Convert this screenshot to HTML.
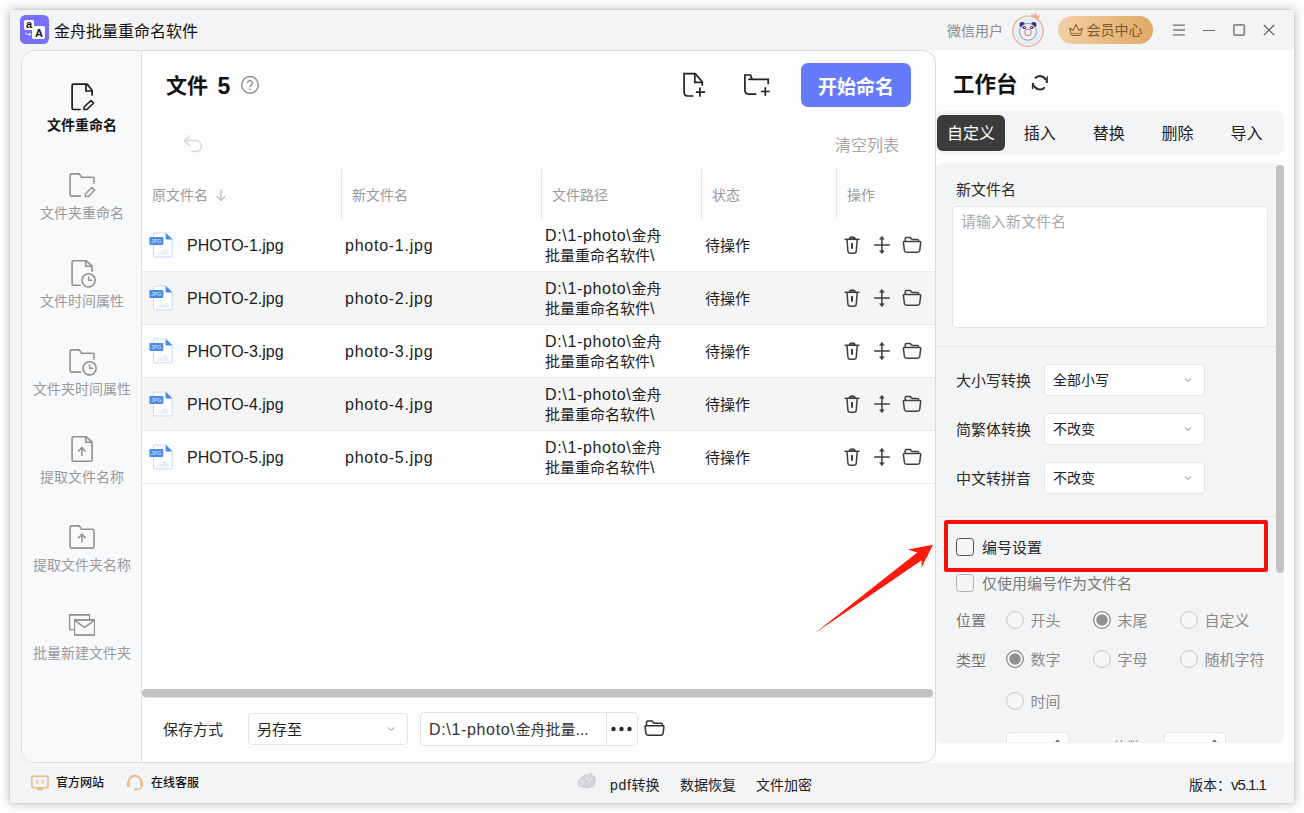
<!DOCTYPE html>
<html lang="zh-CN">
<head>
<meta charset="utf-8">
<title>金舟批量重命名软件</title>
<style>
*{box-sizing:border-box;margin:0;padding:0}
html,body{width:1304px;height:813px;overflow:hidden;background:#fff}
body{font-family:"Liberation Sans","Noto Sans CJK SC",sans-serif;color:#1a1a1a;position:relative}
.abs{position:absolute}
.t{position:absolute;white-space:nowrap;line-height:1}
#win{position:absolute;left:10px;top:10px;width:1284px;height:793px;background:#f3f4f6;box-shadow:0 0 10px rgba(0,0,0,.30),0 0 2px rgba(0,0,0,.10)}
/* everything inside uses page coords via #page */
#page{position:absolute;left:0;top:0;width:1304px;height:813px}
#main{left:21px;top:50px;width:915px;height:713px;background:#fdfdfd;border:1px solid #dadadd;border-radius:14px 13px 13px 14px}
#side{left:22px;top:51px;width:120px;height:711px;background:#f8f9fb;border-right:1px solid #e2e2e5;border-radius:13px 0 0 13px}
#right{left:915px;top:50px;width:379px;height:713px;background:#fdfdfd}
.navl{font-size:14px;color:#9a9a9a;width:120px;left:22px;text-align:center}
.navl.on{color:#141414;font-weight:bold}
.th{font-size:14px;color:#9b9b9b}
.vsep{width:1px;background:#e4e4e6;top:169px;height:50px}
.row{left:142px;width:793px;height:53px;border-bottom:1px solid #e9e9eb}
.row.g{background:#f5f5f6}
.c16{font-size:16px;color:#1c1c1c}
.sel{background:#fff;border:1px solid #e3e4e8;border-radius:4px}
.lab{font-size:15px;color:#2a2a2a}
.rad{width:18px;height:18px;border-radius:50%;border:1px solid #c8c8cb;background:#f6f6f8}
.rad.on{border:1.300px solid #8c8c8e;background:#fbfbfc}
.rad.on::after{content:"";position:absolute;left:2px;top:2px;width:11.400px;height:11.400px;border-radius:50%;background:#909092}
.rl{font-size:15px;color:#8a8a8a}
</style>
</head>
<body>
<div id="win"></div>
<div id="page">
<!--TITLEBAR-->
<div class="abs" style="left:20px;top:15px;width:29px;height:29px;border-radius:5.500px;background:#7870fb"></div>
<div class="abs" style="left:23.800px;top:19.800px;width:10.600px;height:10.200px;border-radius:1.800px;background:#fff"></div>
<div class="abs" style="left:32.300px;top:26.200px;width:12.800px;height:13.100px;border-radius:1.800px;background:#fff"></div>
<div class="t" style="left:26px;top:18.800px;font-size:11px;font-weight:bold;color:#111">a</div>
<div class="t" style="left:35px;top:28.400px;font-size:11px;font-weight:bold;color:#111">A</div>
<svg class="abs" style="left:24px;top:31px" width="9" height="6" viewBox="24 31 9 6"><path d="M25.400 32.600Q26 34.400 28 34.400H30.400" fill="none" stroke="#fff" stroke-width="0.900"/><path d="M29.400 32.800L31.200 34.400L29.400 36z" fill="#fff"/></svg>
<div class="t" style="left:54px;top:23.800px;font-size:16px;color:#111">金舟批量重命名软件</div>
<div class="t" style="left:947px;top:24px;font-size:14px;color:#8a8a8a">微信用户</div>
<!-- avatar -->
<svg class="abs" style="left:1010px;top:11px" width="38" height="38" viewBox="0 0 38 38">
<circle cx="18" cy="20.200" r="15.200" fill="#fdf3ea" stroke="#eaa988" stroke-width="1.2"/>
<circle cx="18" cy="20.200" r="13.600" fill="#dff0fc"/>
<circle cx="12.200" cy="13.600" r="2.700" fill="#3d2c6e"/><circle cx="23.800" cy="13.600" r="2.700" fill="#3d2c6e"/>
<circle cx="18" cy="20.800" r="8.400" fill="#fbefe2" stroke="#7566a6" stroke-width="0.700"/>
<ellipse cx="14.300" cy="16.600" rx="1.900" ry="1.500" fill="#4b3a80"/><ellipse cx="21.700" cy="16.600" rx="1.900" ry="1.500" fill="#4b3a80"/>
<circle cx="14.600" cy="16.500" r="0.600" fill="#fff"/><circle cx="21.400" cy="16.500" r="0.600" fill="#fff"/>
<rect x="15" y="18.200" width="6" height="6.200" rx="2" fill="#fdf6ee" stroke="#7566a6" stroke-width="0.800"/>
<path d="M20.700 5.800l0.900-3.400 2.300 2.400 1.700-3 1.500 3.300 3-1-1.600 4.200z" fill="#f0ae92"/>
</svg>
<!-- vip -->
<div class="abs" style="left:1058px;top:16px;width:95px;height:28px;border-radius:14px;background:linear-gradient(90deg,#f1d0a6,#e0a964)"></div>
<svg class="abs" style="left:1068px;top:23px" width="16" height="14" viewBox="0 0 16 14"><path d="M1.700 5.200l3.300 2.200L8 1.400l3 6 3.300-2.200-1.300 5.800c-0.200 0.900-0.800 1.400-1.700 1.400H4.700c-0.900 0-1.500-0.500-1.700-1.400z" fill="none" stroke="#8a6633" stroke-width="1.100" stroke-linejoin="round"/><path d="M3.600 10.300H12.400" stroke="#8a6633" stroke-width="0.800"/></svg>
<div class="t" style="left:1086.5px;top:22.5px;font-size:14px;color:#7a5829">会员中心</div>
<!-- window controls -->
<svg class="abs" style="left:1172px;top:23px" width="14" height="14" viewBox="0 0 14 14"><path d="M1 2.100h12M1 7h12M1 11.900h12" stroke="#969696" stroke-width="1.800"/></svg>
<div class="abs" style="left:1203px;top:30px;width:12px;height:1.3px;background:#6a6a6a"></div>
<svg class="abs" style="left:1232px;top:23px" width="14" height="14" viewBox="0 0 14 14"><rect x="1.900" y="1.900" width="10.400" height="10.200" rx="1" fill="none" stroke="#878787" stroke-width="1.700"/></svg>
<svg class="abs" style="left:1262px;top:24px" width="14" height="14" viewBox="0 0 14 14"><path d="M1.800 1l10.400 10.200M12.200 1L1.800 11.200" stroke="#555" stroke-width="1.100"/></svg>

<!--MAIN-->
<div class="abs" id="right"></div>
<div class="abs" id="main"></div>
<div class="abs" id="side"></div>
<svg class="abs" style="left:62px;top:76px" width="40" height="40" viewBox="62 76 40 40"><g fill="none" stroke="#1c1c1c" stroke-width="1.700" stroke-linejoin="round"><path d="M80.700 109.500H73.600Q72.100 109.500 72.100 108V85.600Q72.100 84.100 73.600 84.100H87.100L92.100 90.300V95.700"/><path d="M86 84.100V91H92.100" stroke-linejoin="miter"/><path d="M83.900 109.600L84.200 106.700L91 100.600L93.500 102.900L87 109.600z" stroke-width="1.500"/></g></svg>
<svg class="abs" style="left:62px;top:165px" width="40" height="480" viewBox="62 165 40 480"><g fill="none" stroke="#919191" stroke-width="1.600" stroke-linejoin="round"><path d="M80.900 196.1H71.600Q70.100 196.1 70.100 194.6V175.4Q70.100 173.9 71.600 173.9H79.200L81.700 177.3H92.800Q94 177.3 94 178.5V183.7"/><path d="M85.400 196.500V193.800L91.800 187.600L94.700 190.100L88.500 196.500z" stroke-width="1.400"/><path d="M80.700 285.2H73.400Q72.100 285.2 72.100 283.9V262.1Q72.100 260.8 73.400 260.8H86.400L92.100 266.2V271.7"/><path d="M85.800 260.8V266.3H92.100"/><circle cx="88.6" cy="280.3" r="6.600"/><path d="M88.6 276.6V280.3H92.3" stroke-width="1.400"/><path d="M80.900 372.1H71.600Q70.100 372.1 70.100 370.6V351.4Q70.100 349.9 71.600 349.9H79.200L81.700 353.3H92.800Q94 353.3 94 354.5V359.7"/><circle cx="89.6" cy="368.3" r="6.600"/><path d="M89.6 364.6V368.3H93.3" stroke-width="1.400"/><path d="M73.400 436.8H86.400L92.100 442.2V459.9Q92.100 461.2 90.800 461.2H73.400Q72.100 461.2 72.100 459.9V438.1Q72.100 436.8 73.400 436.8z"/><path d="M85.800 436.8V442.3H92.100"/><path d="M81.9 447.90000000000003V456.1M78.2 451.6L81.9 447.6L85.60000000000001 451.6" stroke-width="1.500" stroke-linejoin="miter"/><path d="M71.600 525.9H79.200L81.700 529.3H92.500Q94 529.3 94 530.8V546.6Q94 548.1 92.500 548.1H71.600Q70.100 548.1 70.100 546.6V527.4Q70.100 525.9 71.600 525.9z"/><path d="M81.9 534.5V542.6M78.2 538.2L81.9 534.2L85.60000000000001 538.2" stroke-width="1.500" stroke-linejoin="miter"/><path d="M74.300 629.800H69.600V614.800H89.500V619.300" stroke-width="1.300" stroke-linejoin="miter"/><path d="M69.100 614.800H89.900" stroke-width="1.700"/><rect x="74.600" y="619.900" width="19.800" height="15.100" stroke-width="1.100"/><path d="M74.100 619.900H94.900M74.100 635H94.900" stroke-width="1.700"/><path d="M75 620.700L84.500 627.400L94 620.700" stroke-width="1.500" stroke-linejoin="miter"/></g></svg>
<div class="t navl on" style="top:118px">文件重命名</div>
<div class="t navl" style="top:206px">文件夹重命名</div>
<div class="t navl" style="top:294px">文件时间属性</div>
<div class="t navl" style="top:382px">文件夹时间属性</div>
<div class="t navl" style="top:470px">提取文件名称</div>
<div class="t navl" style="top:558px">提取文件夹名称</div>
<div class="t navl" style="top:646px">批量新建文件夹</div>
<div class="t" style="left:166px;top:69px;font-size:21px;font-weight:bold;color:#111;line-height:32px;height:32px">文件<span style="font-size:23px;margin-left:9.500px;position:relative;top:0.500px">5</span></div>
<svg class="abs" style="left:240px;top:75px" width="20" height="20" viewBox="0 0 20 20"><circle cx="10" cy="9.900" r="8.300" fill="none" stroke="#8f8f8f" stroke-width="1.500"/><path d="M7.500 8.100a2.500 2.500 0 1 1 3.800 2.100c-0.900 0.600-1.300 1-1.300 2" fill="none" stroke="#8f8f8f" stroke-width="1.400"/><circle cx="10" cy="14.300" r="0.900" fill="#8f8f8f"/></svg>
<svg class="abs" style="left:675px;top:65px" width="100" height="40" viewBox="675 65 100 40"><g fill="none" stroke="#222" stroke-width="1.700"><path d="M693.400 96H688.200Q684.100 96 684.100 91.900V73.700H695.200L702.300 81.800V85.800"/><path d="M694.800 73.700V82.300H702.300"/><path d="M695.900 92.200H705.100M699.900 87.600V96.800"/><path d="M756.300 94.100H749Q744.900 94.100 744.900 90V75H750.500L752.100 79.300H768.200V84.300"/><path d="M748.200 79.300H752.100"/><path d="M760.900 91.500H769.700M765.300 87.200V95.800"/></g></svg>
<div class="abs" style="left:801px;top:63px;width:110px;height:44px;border-radius:7px;background:#657bfb"></div>
<div class="t" style="left:801px;top:77.500px;width:110px;text-align:center;font-size:19px;font-weight:bold;color:#fff">开始命名</div>
<svg class="abs" style="left:182px;top:133px" width="22" height="22" viewBox="0 0 22 22"><path d="M7.500 2.800L2.500 7.600l5 4.800" fill="none" stroke="#d9d9dc" stroke-width="1.500" stroke-linejoin="round" stroke-linecap="round"/><path d="M3 7.600H14a5.500 5.500 0 0 1 0 11H10" fill="none" stroke="#d9d9dc" stroke-width="1.500" stroke-linecap="round"/></svg>
<div class="t" style="left:835px;top:137.500px;font-size:16px;color:#a8a8a8">清空列表</div>
<div class="t th" style="left:152px;top:188px">原文件名</div>
<div class="t th" style="left:352px;top:188px">新文件名</div>
<div class="t th" style="left:552px;top:188px">文件路径</div>
<div class="t th" style="left:712px;top:188px">状态</div>
<div class="t th" style="left:847px;top:188px">操作</div>
<svg class="abs" style="left:215px;top:188px" width="12" height="14" viewBox="0 0 12 14"><path d="M6 1.200V12.500M1.800 8.300L6 12.500l4.200-4.200" fill="none" stroke="#bcbcbc" stroke-width="1.300"/></svg>
<div class="abs vsep" style="left:341px"></div>
<div class="abs vsep" style="left:541px"></div>
<div class="abs vsep" style="left:701px"></div>
<div class="abs vsep" style="left:836px"></div>
<div class="abs row" style="top:219px"></div>
<svg class="abs" style="left:146px;top:228px" width="32" height="34" viewBox="146 228 32 34"><path d="M154.600 233H165.800L172.200 239.300V255.800Q172.200 256.900 171.100 256.900H154.600Q153.500 256.900 153.500 255.800V234.100Q153.500 233 154.600 233z" fill="#fefeff" stroke="#c6d9f6" stroke-width="1"/><path d="M165.600 232.700L172.500 239.500H166.600Q165.600 239.500 165.600 238.500z" fill="#4a87e6"/><path d="M156.900 254.700L160 250.600 161.800 252.400C163 249 166 247.200 168 251.500L169 254.700z" fill="#e6f0fd"/><circle cx="160.400" cy="247.200" r="0.900" fill="#e6f0fd"/><rect x="149.400" y="237" width="13.900" height="7.900" rx="0.800" fill="#4e89e6"/><text x="156.300" y="242.900" font-size="5.400" font-family="Liberation Sans, sans-serif" fill="#dfeafc" text-anchor="middle">JPG</text></svg>
<div class="t c16" style="left:187px;top:238px">PHOTO-1.jpg</div>
<div class="t c16" style="left:345px;top:238px;letter-spacing:0.750px">photo-1.jpg</div>
<div class="t c16" style="left:545px;top:226px;line-height:20px;font-size:15px"><span style="font-size:16px;letter-spacing:0.660px">D:\1-photo\</span>金舟<br>批量重命名软件<span style="font-size:16px">\</span></div>
<div class="t" style="left:705px;top:238px;font-size:15px;color:#1c1c1c">待操作</div>
<svg class="abs" style="left:840px;top:228px" width="90" height="34" viewBox="840 228 90 34"><g fill="none" stroke="#404040" stroke-width="1.500"><path d="M844.500 239.300H859.600"/><path d="M849.400 239.300C849.600 236.300 855 236.300 855.200 239.300z" fill="#404040" fill-opacity="0.350"/><path d="M847 239.600L847.900 251Q848.100 253.300 850.400 253.300H853.800Q856.100 253.300 856.300 251L857.200 239.600"/><path d="M852 243.100V248.700" stroke-width="2"/><path d="M881.900 237.500V252.500M874.100 244.900H889.800"/><path d="M881.900 236.300L884.200 239.300H879.600zM881.900 253.700L884.200 250.700H879.600z" fill="#404040" stroke-width="0.600"/><path d="M905.200 241.600V238.700Q905.200 237.600 906.300 237.600H910.300L912.200 239.500H917.400Q918.500 239.500 918.500 240.600V241.600"/><path d="M904.300 241.600H919.800Q920.800 241.600 920.700 242.600L919.700 250.400Q919.400 252.200 917.600 252.200H906.500Q904.700 252.200 904.400 250.400L903.400 242.600Q903.300 241.600 904.300 241.600z"/></g></svg>
<div class="abs row g" style="top:272px"></div>
<svg class="abs" style="left:146px;top:281px" width="32" height="34" viewBox="146 228 32 34"><path d="M154.600 233H165.800L172.200 239.300V255.800Q172.200 256.900 171.100 256.900H154.600Q153.500 256.900 153.500 255.800V234.100Q153.500 233 154.600 233z" fill="#fefeff" stroke="#c6d9f6" stroke-width="1"/><path d="M165.600 232.700L172.500 239.500H166.600Q165.600 239.500 165.600 238.500z" fill="#4a87e6"/><path d="M156.900 254.700L160 250.600 161.800 252.400C163 249 166 247.200 168 251.500L169 254.700z" fill="#e6f0fd"/><circle cx="160.400" cy="247.200" r="0.900" fill="#e6f0fd"/><rect x="149.400" y="237" width="13.900" height="7.900" rx="0.800" fill="#4e89e6"/><text x="156.300" y="242.900" font-size="5.400" font-family="Liberation Sans, sans-serif" fill="#dfeafc" text-anchor="middle">JPG</text></svg>
<div class="t c16" style="left:187px;top:291px">PHOTO-2.jpg</div>
<div class="t c16" style="left:345px;top:291px;letter-spacing:0.750px">photo-2.jpg</div>
<div class="t c16" style="left:545px;top:279px;line-height:20px;font-size:15px"><span style="font-size:16px;letter-spacing:0.660px">D:\1-photo\</span>金舟<br>批量重命名软件<span style="font-size:16px">\</span></div>
<div class="t" style="left:705px;top:291px;font-size:15px;color:#1c1c1c">待操作</div>
<svg class="abs" style="left:840px;top:281px" width="90" height="34" viewBox="840 228 90 34"><g fill="none" stroke="#404040" stroke-width="1.500"><path d="M844.500 239.300H859.600"/><path d="M849.400 239.300C849.600 236.300 855 236.300 855.200 239.300z" fill="#404040" fill-opacity="0.350"/><path d="M847 239.600L847.900 251Q848.100 253.300 850.400 253.300H853.800Q856.100 253.300 856.300 251L857.200 239.600"/><path d="M852 243.100V248.700" stroke-width="2"/><path d="M881.900 237.500V252.500M874.100 244.900H889.800"/><path d="M881.900 236.300L884.200 239.300H879.600zM881.900 253.700L884.200 250.700H879.600z" fill="#404040" stroke-width="0.600"/><path d="M905.200 241.600V238.700Q905.200 237.600 906.300 237.600H910.300L912.200 239.500H917.400Q918.500 239.500 918.500 240.600V241.600"/><path d="M904.300 241.600H919.800Q920.800 241.600 920.700 242.600L919.700 250.400Q919.400 252.200 917.600 252.200H906.500Q904.700 252.200 904.400 250.400L903.400 242.600Q903.300 241.600 904.300 241.600z"/></g></svg>
<div class="abs row" style="top:325px"></div>
<svg class="abs" style="left:146px;top:334px" width="32" height="34" viewBox="146 228 32 34"><path d="M154.600 233H165.800L172.200 239.300V255.800Q172.200 256.900 171.100 256.900H154.600Q153.500 256.900 153.500 255.800V234.100Q153.500 233 154.600 233z" fill="#fefeff" stroke="#c6d9f6" stroke-width="1"/><path d="M165.600 232.700L172.500 239.500H166.600Q165.600 239.500 165.600 238.500z" fill="#4a87e6"/><path d="M156.900 254.700L160 250.600 161.800 252.400C163 249 166 247.200 168 251.500L169 254.700z" fill="#e6f0fd"/><circle cx="160.400" cy="247.200" r="0.900" fill="#e6f0fd"/><rect x="149.400" y="237" width="13.900" height="7.900" rx="0.800" fill="#4e89e6"/><text x="156.300" y="242.900" font-size="5.400" font-family="Liberation Sans, sans-serif" fill="#dfeafc" text-anchor="middle">JPG</text></svg>
<div class="t c16" style="left:187px;top:344px">PHOTO-3.jpg</div>
<div class="t c16" style="left:345px;top:344px;letter-spacing:0.750px">photo-3.jpg</div>
<div class="t c16" style="left:545px;top:332px;line-height:20px;font-size:15px"><span style="font-size:16px;letter-spacing:0.660px">D:\1-photo\</span>金舟<br>批量重命名软件<span style="font-size:16px">\</span></div>
<div class="t" style="left:705px;top:344px;font-size:15px;color:#1c1c1c">待操作</div>
<svg class="abs" style="left:840px;top:334px" width="90" height="34" viewBox="840 228 90 34"><g fill="none" stroke="#404040" stroke-width="1.500"><path d="M844.500 239.300H859.600"/><path d="M849.400 239.300C849.600 236.300 855 236.300 855.200 239.300z" fill="#404040" fill-opacity="0.350"/><path d="M847 239.600L847.900 251Q848.100 253.300 850.400 253.300H853.800Q856.100 253.300 856.300 251L857.200 239.600"/><path d="M852 243.100V248.700" stroke-width="2"/><path d="M881.900 237.500V252.500M874.100 244.900H889.800"/><path d="M881.900 236.300L884.200 239.300H879.600zM881.900 253.700L884.200 250.700H879.600z" fill="#404040" stroke-width="0.600"/><path d="M905.200 241.600V238.700Q905.200 237.600 906.300 237.600H910.300L912.200 239.500H917.400Q918.500 239.500 918.500 240.600V241.600"/><path d="M904.300 241.600H919.800Q920.800 241.600 920.700 242.600L919.700 250.400Q919.400 252.200 917.600 252.200H906.500Q904.700 252.200 904.400 250.400L903.400 242.600Q903.300 241.600 904.300 241.600z"/></g></svg>
<div class="abs row g" style="top:378px"></div>
<svg class="abs" style="left:146px;top:387px" width="32" height="34" viewBox="146 228 32 34"><path d="M154.600 233H165.800L172.200 239.300V255.800Q172.200 256.900 171.100 256.900H154.600Q153.500 256.900 153.500 255.800V234.100Q153.500 233 154.600 233z" fill="#fefeff" stroke="#c6d9f6" stroke-width="1"/><path d="M165.600 232.700L172.500 239.500H166.600Q165.600 239.500 165.600 238.500z" fill="#4a87e6"/><path d="M156.900 254.700L160 250.600 161.800 252.400C163 249 166 247.200 168 251.500L169 254.700z" fill="#e6f0fd"/><circle cx="160.400" cy="247.200" r="0.900" fill="#e6f0fd"/><rect x="149.400" y="237" width="13.900" height="7.900" rx="0.800" fill="#4e89e6"/><text x="156.300" y="242.900" font-size="5.400" font-family="Liberation Sans, sans-serif" fill="#dfeafc" text-anchor="middle">JPG</text></svg>
<div class="t c16" style="left:187px;top:397px">PHOTO-4.jpg</div>
<div class="t c16" style="left:345px;top:397px;letter-spacing:0.750px">photo-4.jpg</div>
<div class="t c16" style="left:545px;top:385px;line-height:20px;font-size:15px"><span style="font-size:16px;letter-spacing:0.660px">D:\1-photo\</span>金舟<br>批量重命名软件<span style="font-size:16px">\</span></div>
<div class="t" style="left:705px;top:397px;font-size:15px;color:#1c1c1c">待操作</div>
<svg class="abs" style="left:840px;top:387px" width="90" height="34" viewBox="840 228 90 34"><g fill="none" stroke="#404040" stroke-width="1.500"><path d="M844.500 239.300H859.600"/><path d="M849.400 239.300C849.600 236.300 855 236.300 855.200 239.300z" fill="#404040" fill-opacity="0.350"/><path d="M847 239.600L847.900 251Q848.100 253.300 850.400 253.300H853.800Q856.100 253.300 856.300 251L857.200 239.600"/><path d="M852 243.100V248.700" stroke-width="2"/><path d="M881.900 237.500V252.500M874.100 244.900H889.800"/><path d="M881.900 236.300L884.200 239.300H879.600zM881.900 253.700L884.200 250.700H879.600z" fill="#404040" stroke-width="0.600"/><path d="M905.200 241.600V238.700Q905.200 237.600 906.300 237.600H910.300L912.200 239.500H917.400Q918.500 239.500 918.500 240.600V241.600"/><path d="M904.300 241.600H919.800Q920.800 241.600 920.700 242.600L919.700 250.400Q919.400 252.200 917.600 252.200H906.500Q904.700 252.200 904.400 250.400L903.400 242.600Q903.300 241.600 904.300 241.600z"/></g></svg>
<div class="abs row" style="top:431px"></div>
<svg class="abs" style="left:146px;top:440px" width="32" height="34" viewBox="146 228 32 34"><path d="M154.600 233H165.800L172.200 239.300V255.800Q172.200 256.900 171.100 256.900H154.600Q153.500 256.900 153.500 255.800V234.100Q153.500 233 154.600 233z" fill="#fefeff" stroke="#c6d9f6" stroke-width="1"/><path d="M165.600 232.700L172.500 239.500H166.600Q165.600 239.500 165.600 238.500z" fill="#4a87e6"/><path d="M156.900 254.700L160 250.600 161.800 252.400C163 249 166 247.200 168 251.500L169 254.700z" fill="#e6f0fd"/><circle cx="160.400" cy="247.200" r="0.900" fill="#e6f0fd"/><rect x="149.400" y="237" width="13.900" height="7.900" rx="0.800" fill="#4e89e6"/><text x="156.300" y="242.900" font-size="5.400" font-family="Liberation Sans, sans-serif" fill="#dfeafc" text-anchor="middle">JPG</text></svg>
<div class="t c16" style="left:187px;top:450px">PHOTO-5.jpg</div>
<div class="t c16" style="left:345px;top:450px;letter-spacing:0.750px">photo-5.jpg</div>
<div class="t c16" style="left:545px;top:438px;line-height:20px;font-size:15px"><span style="font-size:16px;letter-spacing:0.660px">D:\1-photo\</span>金舟<br>批量重命名软件<span style="font-size:16px">\</span></div>
<div class="t" style="left:705px;top:450px;font-size:15px;color:#1c1c1c">待操作</div>
<svg class="abs" style="left:840px;top:440px" width="90" height="34" viewBox="840 228 90 34"><g fill="none" stroke="#404040" stroke-width="1.500"><path d="M844.500 239.300H859.600"/><path d="M849.400 239.300C849.600 236.300 855 236.300 855.200 239.300z" fill="#404040" fill-opacity="0.350"/><path d="M847 239.600L847.900 251Q848.100 253.300 850.400 253.300H853.800Q856.100 253.300 856.300 251L857.200 239.600"/><path d="M852 243.100V248.700" stroke-width="2"/><path d="M881.900 237.500V252.500M874.100 244.900H889.800"/><path d="M881.900 236.300L884.200 239.300H879.600zM881.900 253.700L884.200 250.700H879.600z" fill="#404040" stroke-width="0.600"/><path d="M905.200 241.600V238.700Q905.200 237.600 906.300 237.600H910.300L912.200 239.500H917.400Q918.500 239.500 918.500 240.600V241.600"/><path d="M904.300 241.600H919.800Q920.800 241.600 920.700 242.600L919.700 250.400Q919.400 252.200 917.600 252.200H906.500Q904.700 252.200 904.400 250.400L903.400 242.600Q903.300 241.600 904.300 241.600z"/></g></svg>
<div class="abs" style="left:142px;top:697px;width:793px;height:1px;background:#e4e4e7"></div>
<div class="abs" style="left:142px;top:689px;width:791px;height:8px;border-radius:4px;background:#c2c2c2"></div>
<div class="t" style="left:163px;top:722px;font-size:15px;color:#2a2a2a">保存方式</div>
<div class="abs sel" style="left:248px;top:713px;width:160px;height:32px"></div>
<div class="t" style="left:257px;top:722px;font-size:15px;color:#222">另存至</div>
<svg class="abs" style="left:386px;top:725px" width="10" height="8" viewBox="0 0 10 8"><path d="M2 2.500l3 3 3-3" fill="none" stroke="#b5b5b5" stroke-width="1.100"/></svg>
<div class="abs sel" style="left:420px;top:712px;width:218px;height:34px"></div>
<div class="abs" style="left:606px;top:713px;width:1px;height:32px;background:#e3e4e8"></div>
<div class="t" style="left:429px;top:722px;font-size:15px;color:#333"><span style="font-size:16px;letter-spacing:0.660px">D:\1-photo\</span>金舟批量<span style="font-size:16px">...</span></div>
<svg class="abs" style="left:609.0px;top:725px" width="8" height="8" viewBox="0 0 8 8"><circle cx="4.500" cy="4" r="2.200" fill="#262626"/></svg>
<svg class="abs" style="left:616.8px;top:725px" width="8" height="8" viewBox="0 0 8 8"><circle cx="4.500" cy="4" r="2.200" fill="#262626"/></svg>
<svg class="abs" style="left:624.6px;top:725px" width="8" height="8" viewBox="0 0 8 8"><circle cx="4.500" cy="4" r="2.200" fill="#262626"/></svg>
<svg class="abs" style="left:643.5px;top:719px" width="22" height="19" viewBox="0 0 22 19"><path d="M2.500 7V3.500a1.500 1.500 0 0 1 1.500-1.500h4l2 2.300H17a1.500 1.500 0 0 1 1.500 1.500V7" fill="none" stroke="#2e2e2e" stroke-width="1.500" stroke-linejoin="round"/><path d="M2 6.800H19a0.900 0.900 0 0 1 0.900 1l-0.800 6.700a2 2 0 0 1-2 1.800H4a2 2 0 0 1-2-1.800L1.100 7.800a0.900 0.900 0 0 1 0.900-1z" fill="none" stroke="#2e2e2e" stroke-width="1.500" stroke-linejoin="round"/></svg>
<svg class="abs" style="left:800px;top:530px" width="150" height="115" viewBox="800 530 150 115"><path d="M814.400 633.500L917.300 552.600L907.900 549.600L933 544.800L921.500 567.600L921.700 560.300Z" fill="#fb1a0d"/></svg>

<!--RIGHT-->
<div class="t" style="left:953px;top:75px;font-size:21.500px;font-weight:bold;color:#111">工作台</div>
<svg class="abs" style="left:1028px;top:71px" width="24" height="24" viewBox="-12 -12 24 24"><g transform="translate(-0.100,-0.200)" fill="none" stroke="#262626" stroke-width="2"><path d="M-4.900 -4.500A6.600 6.600 0 0 1 6.100 -2.600"/><path d="M8 -6.600V0.200H5.800L6.900 -6.600z" fill="#262626" stroke="none"/><path d="M4.900 4.500A6.600 6.600 0 0 1 -6.100 2.600"/><path d="M-8 6.400V0.200H-5.800L-6.900 6.400z" fill="#262626" stroke="none"/></g></svg>
<div class="abs" style="left:936px;top:111px;width:348px;height:43.500px;border-radius:8px;background:#f3f4f6"></div>
<div class="abs" style="left:937px;top:115px;width:68px;height:35.500px;border-radius:6px;background:#3b3b3b"></div>
<div class="t" style="left:931.0px;top:126px;width:80px;text-align:center;font-size:16px;color:#fff">自定义</div>
<div class="t" style="left:999.8px;top:126px;width:80px;text-align:center;font-size:16px;color:#1c1c1c">插入</div>
<div class="t" style="left:1068.7px;top:126px;width:80px;text-align:center;font-size:16px;color:#1c1c1c">替换</div>
<div class="t" style="left:1137.5px;top:126px;width:80px;text-align:center;font-size:16px;color:#1c1c1c">删除</div>
<div class="t" style="left:1206.4px;top:126px;width:80px;text-align:center;font-size:16px;color:#1c1c1c">导入</div>
<div class="abs" style="left:936px;top:163px;width:348px;height:579.600px;border-radius:8px 8px 7px 7px;background:#f3f4f6"></div>
<div class="abs" style="left:1276px;top:165px;width:7.500px;height:408px;border-radius:4px;background:#c2c2c2"></div>
<div class="t lab" style="left:956px;top:182px">新文件名</div>
<div class="abs sel" style="left:952px;top:206px;width:315.500px;height:121.500px"></div>
<div class="t" style="left:961px;top:214px;font-size:15px;color:#a9a9a9">请输入新文件名</div>
<div class="abs" style="left:936px;top:346px;width:340px;height:1px;background:#e4e5e8"></div>
<div class="t lab" style="left:956px;top:372.5px">大小写转换</div>
<div class="abs sel" style="left:1044px;top:364px;width:160.500px;height:31.500px"></div>
<div class="t" style="left:1053px;top:373px;font-size:14px;color:#222">全部小写</div>
<svg class="abs" style="left:1183px;top:376px" width="10" height="8" viewBox="0 0 10 8"><path d="M2 2.500l3 3 3-3" fill="none" stroke="#b5b5b5" stroke-width="1.100"/></svg>
<div class="t lab" style="left:956px;top:421.5px">简繁体转换</div>
<div class="abs sel" style="left:1044px;top:413px;width:160.500px;height:31.500px"></div>
<div class="t" style="left:1053px;top:422px;font-size:14px;color:#222">不改变</div>
<svg class="abs" style="left:1183px;top:425px" width="10" height="8" viewBox="0 0 10 8"><path d="M2 2.500l3 3 3-3" fill="none" stroke="#b5b5b5" stroke-width="1.100"/></svg>
<div class="t lab" style="left:956px;top:470.5px">中文转拼音</div>
<div class="abs sel" style="left:1044px;top:462px;width:160.500px;height:31.500px"></div>
<div class="t" style="left:1053px;top:471px;font-size:14px;color:#222">不改变</div>
<svg class="abs" style="left:1183px;top:474px" width="10" height="8" viewBox="0 0 10 8"><path d="M2 2.500l3 3 3-3" fill="none" stroke="#b5b5b5" stroke-width="1.100"/></svg>
<div class="abs" style="left:936px;top:516px;width:340px;height:1px;background:#e4e5e8"></div>
<div class="abs" style="left:944px;top:519.500px;width:324px;height:52px;border:4px solid #fb0f0a;border-radius:2.500px"></div>
<div class="abs" style="left:956px;top:538px;width:18px;height:17.500px;border:1.300px solid #505050;border-radius:3.500px;background:#f5f5f7"></div>
<div class="t" style="left:982px;top:540px;font-size:15px;color:#2a2a2a">编号设置</div>
<div class="abs" style="left:956px;top:574px;width:18px;height:18px;border:1.200px solid #b0b0b2;border-radius:3.500px;background:#f5f5f7"></div>
<div class="t" style="left:982px;top:576px;font-size:15px;color:#7a7a7a">仅使用编号作为文件名</div>
<div class="t" style="left:956px;top:613px;font-size:15px;color:#747474">位置</div>
<svg class="abs" style="left:1005px;top:610px" width="20" height="20" viewBox="0 0 20 20"><circle cx="10" cy="10" r="8.400" fill="#f7f7f9" stroke="#c6c6c9" stroke-width="1"/></svg>
<div class="t rl" style="left:1030.5px;top:613.0px">开头</div>
<svg class="abs" style="left:1092px;top:610px" width="20" height="20" viewBox="0 0 20 20"><circle cx="10" cy="10" r="8.300" fill="#fbfbfc" stroke="#8c8c8e" stroke-width="1.300"/><circle cx="10" cy="10" r="5.800" fill="#919193"/></svg>
<div class="t rl" style="left:1117.5px;top:613.0px">末尾</div>
<svg class="abs" style="left:1179px;top:610px" width="20" height="20" viewBox="0 0 20 20"><circle cx="10" cy="10" r="8.400" fill="#f7f7f9" stroke="#c6c6c9" stroke-width="1"/></svg>
<div class="t rl" style="left:1204.5px;top:613.0px">自定义</div>
<div class="t" style="left:956px;top:653px;font-size:15px;color:#747474">类型</div>
<svg class="abs" style="left:1005px;top:649px" width="20" height="20" viewBox="0 0 20 20"><circle cx="10" cy="10" r="8.300" fill="#fbfbfc" stroke="#8c8c8e" stroke-width="1.300"/><circle cx="10" cy="10" r="5.800" fill="#919193"/></svg>
<div class="t rl" style="left:1030.5px;top:652.0px">数字</div>
<svg class="abs" style="left:1092px;top:649px" width="20" height="20" viewBox="0 0 20 20"><circle cx="10" cy="10" r="8.400" fill="#f7f7f9" stroke="#c6c6c9" stroke-width="1"/></svg>
<div class="t rl" style="left:1117.5px;top:652.0px">字母</div>
<svg class="abs" style="left:1179px;top:649px" width="20" height="20" viewBox="0 0 20 20"><circle cx="10" cy="10" r="8.400" fill="#f7f7f9" stroke="#c6c6c9" stroke-width="1"/></svg>
<div class="t rl" style="left:1204.5px;top:652.0px">随机字符</div>
<svg class="abs" style="left:1005px;top:691px" width="20" height="20" viewBox="0 0 20 20"><circle cx="10" cy="10" r="8.400" fill="#f7f7f9" stroke="#c6c6c9" stroke-width="1"/></svg>
<div class="t rl" style="left:1030.5px;top:693.5px">时间</div>
<div class="abs" style="left:936px;top:725px;width:348px;height:17px;overflow:hidden;border-radius:0 0 7px 7px"><div class="abs sel" style="left:70px;top:6.500px;width:62.500px;height:30px;border-radius:5px"></div><div class="abs sel" style="left:227.500px;top:6.500px;width:62px;height:30px;border-radius:5px"></div><div class="t" style="left:176px;top:14.500px;font-size:15px;color:#888">位数</div><div class="abs" style="left:119.800px;top:14.600px;width:3px;height:3px;background:#666;transform:rotate(45deg)"></div><div class="abs" style="left:276.800px;top:14.600px;width:3px;height:3px;background:#666;transform:rotate(45deg)"></div></div>

<!--FOOTER-->
<svg class="abs" style="left:24px;top:766px" width="130" height="34" viewBox="24 766 130 34"><g fill="none" stroke="#ecbc8a"><rect x="31.900" y="776.200" width="16.100" height="11.600" rx="1.600" stroke-width="1.600"/><path d="M36.800 789.700H43.200" stroke-width="1.500"/><path d="M40 788V789.500" stroke-width="3.500"/><path d="M38.300 780.200L36.400 782L38.300 783.800M41.700 780.200L43.600 782L41.700 783.800" stroke-width="1.200"/><path d="M128.600 784V782.200A6.400 6.400 0 0 1 141.400 782.200V784" stroke-width="2"/><rect x="126.800" y="781.300" width="3" height="5.600" rx="1.500" fill="#ecbc8a" stroke="none"/><rect x="140.200" y="781.300" width="3" height="5.600" rx="1.500" fill="#ecbc8a" stroke="none"/><path d="M141.600 786.500Q141 789.300 136.500 789.400" stroke-width="1.200"/><circle cx="135.700" cy="789.400" r="1.400" fill="#ecbc8a" stroke="none"/></g></svg>
<div class="t" style="left:56px;top:777px;font-size:12px;font-weight:500;color:#111">官方网站</div>
<div class="t" style="left:151px;top:777px;font-size:12px;font-weight:500;color:#111">在线客服</div>
<svg class="abs" style="left:570px;top:765px" width="40" height="30" viewBox="570 765 40 30"><defs><filter id="bl" x="-20%" y="-20%" width="140%" height="140%"><feGaussianBlur stdDeviation="0.550"/></filter></defs><g filter="url(#bl)"><path d="M578.2 785.7L578.9 779.8L582.2 777.2L585.9 774.5L588.1 776.1L590.7 772.9L592.1 774.4L591.6 776.1L594.4 776.1L595.3 780.5L593.8 786.0L586.6 788.0z" fill="#d2d3d6" stroke="#d2d3d6" stroke-width="1.200" stroke-linejoin="round"/><path d="M580.3 780.5L583.3 780.5M580.1 782.3L583.5 782.3M580.0 784.2L583.7 784.2M586.2 777.2L588.5 779.8L590.7 781.2M592.1 777.5L590.7 779.8" fill="none" stroke="#ecedef" stroke-width="1.100"/></g></svg>
<div class="t" style="left:610px;top:777.500px;font-size:14px;color:#222"><span style="letter-spacing:0.700px">pdf</span>转换</div>
<div class="t" style="left:680px;top:777.500px;font-size:14px;color:#222">数据恢复</div>
<div class="t" style="left:756px;top:777.500px;font-size:14px;color:#222">文件加密</div>
<div class="t" style="left:1189px;top:777px;font-size:14px;color:#1c1c1c;line-height:15px">版本：<span style="font-size:15px;letter-spacing:-1px">v5.1.1</span></div>

</div>
</body>
</html>
